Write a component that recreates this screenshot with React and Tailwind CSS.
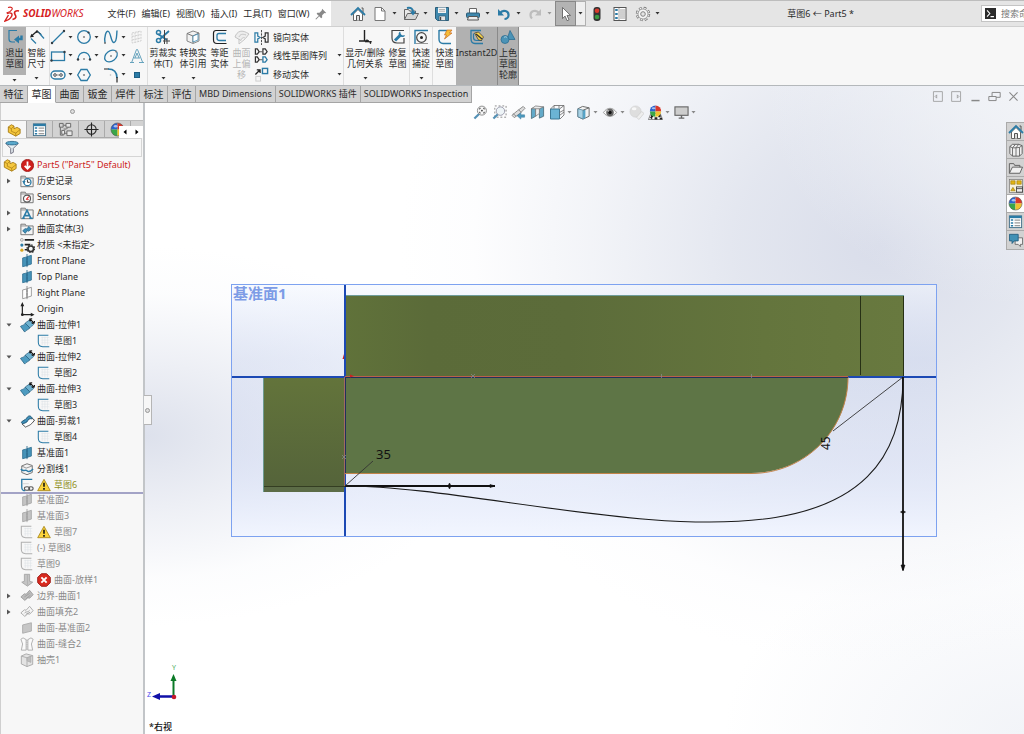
import { useState } from "react";

const BLUE = "#2b7ba6";
const DARK = "#333b42";

function Svg({ w = 16, h = 16, box, children }) {
  return (
    <svg
      width={w}
      height={h}
      viewBox={box || "0 0 16 16"}
      fill="none"
      className="shrink-0"
      aria-hidden="true"
    >
      {children}
    </svg>
  );
}

function Caret({ color = "#333" }) {
  return (
    <svg width="5" height="3" viewBox="0 0 5 3" className="shrink-0" aria-hidden="true">
      <path d="M0.5 0h4L2.5 2.6z" fill={color} />
    </svg>
  );
}

/* ---------- title bar icons ---------- */

const HomeIcon = () => (
  <Svg>
    <path d="M3.5 8v6.5h9V8L8 3.5z" fill="#fff" stroke="#666" />
    <path d="M6.500 14.500V9.500h3v5" fill="#ddd" stroke="#555" />
    <path d="M11.5 2h1.5v4.500" stroke="#555" />
    <path d="M1 9l7-7 7 7" stroke={BLUE} strokeWidth="1.8" />
  </Svg>
);

const NewIcon = () => (
  <Svg>
    <path d="M3 1.5h6.5L13 5v9.5H3z" fill="#fff" stroke="#777" />
    <path d="M9.5 1.5V5H13" stroke="#777" />
  </Svg>
);

const OpenIcon = () => (
  <Svg>
    <path d="M1.5 13.5v-10h4l1 1.5h6v3" fill="#e9e9e9" stroke="#666" />
    <path d="M1.5 13.5l3-6h11l-3 6z" fill="#d5d5d5" stroke="#666" />
    <path d="M4 2c4-1 6 1 6 4" stroke={BLUE} strokeWidth="2" />
    <path d="M7 5.5h6l-3 4z" fill={BLUE} />
  </Svg>
);

const SaveIcon = () => (
  <Svg>
    <path d="M1.5 1.5h13v13h-11l-2-2z" fill="#3f88ad" stroke="#2c5d78" />
    <path d="M4 1.5h8V7H4z" fill="#f4f4f4" />
    <path d="M5 3.5h6M5 5.2h6" stroke="#999" strokeWidth=".7" />
    <path d="M5 10h6.5v4.5H5z" fill="#e5e5e5" stroke="#2c5d78" strokeWidth=".7" />
    <path d="M6.5 11v3" stroke="#444" strokeWidth="1.4" />
  </Svg>
);

const PrintIcon = () => (
  <Svg>
    <path d="M4.5 7V2.5h7V7" fill="#fff" stroke="#666" />
    <rect x="1.5" y="7" width="13" height="4.5" rx="1" fill="#3f88ad" stroke="#2c5d78" />
    <path d="M3.5 10.5h9l1 3.5h-11z" fill="#eee" stroke="#555" />
  </Svg>
);

const UndoIcon = () => (
  <Svg>
    <path d="M4 7c3-4 9-2 8.5 2.5 0 2-2 3.500-4 3.500" stroke={BLUE} strokeWidth="2.2" />
    <path d="M2 3v6.500h6z" fill={BLUE} />
  </Svg>
);

const RedoIcon = () => (
  <Svg>
    <path d="M12 7C9 3 3 5 3.500 9.500c0 1 .5 2 1.500 3" stroke="#bdbdbd" strokeWidth="2.2" />
    <path d="M14 3v6.500H8z" fill="#bdbdbd" />
  </Svg>
);

const CursorIcon = () => (
  <Svg>
    <path d="M4.500 1.500v11l2.600-2.400 2 4.600 1.900-.9-2-4.400H12.500z" fill="#fff" stroke="#555" strokeWidth=".8" />
  </Svg>
);

const TrafficIcon = () => (
  <Svg>
    <rect x="4.500" y="1" width="7" height="14" rx="3" fill="#333" />
    <circle cx="8" cy="4.800" r="2.300" fill="#d93a2b" />
    <circle cx="8" cy="11" r="2.300" fill="#3b9b42" />
  </Svg>
);

const OptionsListIcon = () => (
  <Svg>
    <rect x="2" y="1.500" width="12" height="13" fill="#fff" stroke="#555" />
    <path d="M7 2v12" stroke="#777" strokeWidth=".7" />
    <path d="M3.200 4h2.500M3.200 8h2.500M3.200 12h2.500" stroke={BLUE} strokeWidth="2.200" />
    <path d="M8 4h5M8 6h5M8 8h5M8 10h5M8 12h5" stroke="#888" strokeWidth=".8" />
  </Svg>
);

const GearIcon = () => (
  <Svg>
    <circle cx="8" cy="8" r="5.800" stroke="#777" strokeWidth="2.800" strokeDasharray="2.600 1.955" />
    <circle cx="8" cy="8" r="5.800" stroke="#f6f6f6" strokeWidth="1.300" strokeDasharray="1.600 2.955" strokeDashoffset="-.5" />
    <circle cx="8" cy="8" r="5" fill="#f6f6f6" stroke="#888" strokeWidth=".7" />
    <circle cx="8" cy="8" r="2.300" fill="#e5e5e5" stroke="#777" strokeWidth=".9" />
  </Svg>
);

const PinIcon = () => (
  <Svg w={12} h={12}>
    <path d="M9.500 1l5.500 5.500-1.500.5-1-.3-3 3 0 3-1.300.8-6-6 .8-1.300h3l3-3z" fill="#888" />
    <path d="M5 11l-4 4" stroke="#888" strokeWidth="1.400" />
  </Svg>
);

/* ---------- ribbon icons ---------- */

const ExitSketchIcon = () => (
  <Svg w={18} box="0 0 18 16">
    <path d="M3 1.500h8M3 1v9c0 2 1 3 3 3h3" stroke={BLUE} strokeWidth="1.200" />
    <path d="M15.500 6.500v3.500h-4" stroke={BLUE} strokeWidth="2.400" />
    <path d="M8 10.500l5-4v8z" fill={BLUE} />
  </Svg>
);

const SmartDimIcon = () => (
  <Svg>
    <path d="M2 7.500l6-5.500 4 3.500" stroke="#222" strokeWidth="1.300" />
    <path d="M1 8.500l4-.8-2.500-2.900zM8 1L6 4.300l3.500-1z" fill="#222" />
    <path d="M2 9.500l5 5M11 5l4 4.500" stroke={BLUE} strokeWidth="1.200" />
    <path d="M9 2.500l3.500 3.500" stroke={BLUE} />
  </Svg>
);

const LineIcon = () => (
  <Svg>
    <path d="M2 14L14 2" stroke={BLUE} strokeWidth="1.300" />
    <circle cx="2" cy="14" r="1.200" fill={DARK} />
    <circle cx="14" cy="2" r="1.200" fill={DARK} />
  </Svg>
);

const CircleIcon = () => (
  <Svg>
    <circle cx="8" cy="8" r="6.300" stroke={BLUE} strokeWidth="1.300" />
    <circle cx="8" cy="8" r="1.100" fill="#888" />
    <circle cx="12.500" cy="3.500" r="1.100" fill={DARK} />
  </Svg>
);

const SplineIcon = () => (
  <Svg>
    <path d="M2 14C1 8 3 1 5.500 2.500S8 14 11 13.500 13.500 7 14 1.500" stroke={BLUE} strokeWidth="1.400" />
    <circle cx="2" cy="14" r="1" fill="#777" />
  </Svg>
);

const PlaneDimIcon = () => (
  <Svg>
    <path d="M3 4l9-2v10l-9 2zM3 7.500l9-2M3 11l9-2M6 3.500v10M9 2.500v10" stroke="#cfcfcf" strokeDasharray="2 1" />
  </Svg>
);

const RectIcon = () => (
  <Svg>
    <rect x="1.500" y="4" width="13" height="8.500" stroke={BLUE} strokeWidth="1.300" />
    <circle cx="1.500" cy="12.500" r="1.200" fill={DARK} />
    <circle cx="14.500" cy="4" r="1.200" fill={DARK} />
  </Svg>
);

const ArcIcon = () => (
  <Svg>
    <path d="M2 11.500c0-9.500 12-9.500 12 0" stroke={BLUE} strokeWidth="1.300" />
    <circle cx="2" cy="11.500" r="1.200" fill={DARK} />
    <circle cx="14" cy="11.500" r="1.200" fill={DARK} />
    <circle cx="8" cy="11" r="1" fill="#888" />
  </Svg>
);

const EllipseIcon = () => (
  <Svg>
    <ellipse cx="8" cy="8" rx="7" ry="5" transform="rotate(-38 8 8)" stroke={BLUE} strokeWidth="1.300" />
    <circle cx="8" cy="8" r="1" fill="#888" />
    <circle cx="13" cy="3.500" r="1" fill="#888" />
  </Svg>
);

const TextAIcon = () => (
  <Svg>
    <path d="M1 14.500h4M10 14.500h5M2.800 14L7.500 1.500h1L13.500 14M5 10h6M6 10l2-5 2 5" stroke="#66a3bd" />
  </Svg>
);

const SlotIcon = () => (
  <Svg>
    <rect x="1" y="4" width="14" height="8" rx="4" stroke={BLUE} strokeWidth="1.400" />
    <circle cx="5" cy="8" r="1.300" stroke={DARK} strokeWidth=".9" />
    <circle cx="11" cy="8" r="1.300" stroke={DARK} strokeWidth=".9" />
    <path d="M6 8h4" stroke="#777" strokeWidth=".8" />
  </Svg>
);

const PolygonIcon = () => (
  <Svg>
    <path d="M5 2.500h6L14.300 8 11 13.500H5L1.700 8z" stroke={BLUE} strokeWidth="1.300" />
    <circle cx="8" cy="8" r="1.100" fill="#888" />
  </Svg>
);

const FilletIcon = () => (
  <Svg>
    <path d="M1 2h5" stroke="#444" strokeWidth="1.200" />
    <path d="M5 2c6 0 9 3 9 9" stroke={BLUE} strokeWidth="1.600" />
    <path d="M14 10v5.500" stroke="#222" strokeWidth="1.200" />
    <circle cx="7.500" cy="8" r=".8" fill="#bbb" />
  </Svg>
);

const PointIcon = () => (
  <Svg>
    <rect x="5.500" y="5.500" width="5" height="5" fill={BLUE} stroke="#1d5f85" />
  </Svg>
);

const TrimIcon = () => (
  <Svg>
    <path d="M14 2L5 10M3 5l9 6" stroke={BLUE} strokeWidth="1.800" />
    <circle cx="3.500" cy="3.500" r="2" stroke={BLUE} strokeWidth="1.500" />
    <circle cx="3.500" cy="11.500" r="2" stroke={BLUE} strokeWidth="1.500" />
    <path d="M9.500 1v14M12 9v6M8 12h7" stroke="#444" />
  </Svg>
);

const ConvertIcon = () => (
  <Svg>
    <path d="M2 4.500L8 2l6 2v8l-6 2.500-6-2.500z" fill="#f2f2f2" stroke="#888" />
    <path d="M2 4.500L8 7l6-3M8 7v7" stroke="#777" />
    <path d="M8 7l5-2v6L8 13z" fill="#fff" stroke={BLUE} strokeWidth=".7" />
  </Svg>
);

const OffsetIcon = () => (
  <Svg>
    <path d="M14.500 1.500H4c-1.500 0-2.500 1-2.500 2.500v7c0 2 1 3.500 3.500 3.500h9.500" stroke="#222" strokeWidth="1.200" />
    <path d="M14 4.500H7c-1.300 0-2 .7-2 2V9c0 1.500.8 2.500 2.500 2.500H14" stroke={BLUE} strokeWidth="1.300" />
  </Svg>
);

const SurfOffsetIcon = () => (
  <Svg>
    <path d="M1 8C3 2 8 0 15 5l-3.500 4.500c-2-1.500-3.500-1-4.500 2z" fill="#ededed" stroke="#c4c4c4" />
    <path d="M5 10v5l6-5M5 8c1-2.500 3-3.500 7-2" stroke="#c4c4c4" />
  </Svg>
);

const MirrorIcon = () => (
  <Svg w={15} h={15}>
    <path d="M1 3v10h3V9.500L6.500 8 4 6.500V3z" stroke={BLUE} strokeWidth="1.300" />
    <path d="M15 3v10h-3V9.500L9.500 8 12 6.500V3z" stroke="#333" strokeWidth="1.300" />
    <path d="M8 0v16" stroke="#444" strokeDasharray="2.500 1" />
  </Svg>
);

const PatternIcon = () => (
  <Svg w={15} h={15}>
    <path d="M1.500 1v5.500h2L5.500 4 3.500 1zM9.500 1v5.500h2.500L14 4l-2-3z" stroke="#333" strokeWidth="1.300" />
    <path d="M1.500 9.500V15h2l2-2.500-2-3z" stroke="#333" strokeWidth="1.300" />
    <path d="M9.500 9.500V15h2.500l2-2.500-2-3z" stroke={BLUE} strokeWidth="1.400" />
    <path d="M5 4h4M5 12.500h4" stroke="#555" />
  </Svg>
);

const MoveIcon = () => (
  <Svg w={15} h={15}>
    <path d="M1.500 8L6 3.500M3 3h3.500v3.500" stroke="#222" strokeWidth="1.300" />
    <rect x="9" y="1.500" width="5.500" height="5.500" stroke={BLUE} strokeWidth="1.500" />
    <rect x="2" y="10" width="5" height="5" stroke="#ccc" />
  </Svg>
);

const RelationsIcon = () => (
  <Svg>
    <path d="M7.500 1v11M2 12h10" stroke="#222" strokeWidth="1.400" />
    <path d="M10 10.500l2 2.500h-4zM12 12l1.500 3 1-3" fill="#222" stroke="#222" strokeWidth=".6" />
  </Svg>
);

const RepairIcon = () => (
  <Svg>
    <path d="M14 1.500H2v7.500c0 3 2 5 5 5h7V9" stroke="#444" strokeWidth="1.200" />
    <path d="M5 11.500l6-6" stroke={BLUE} strokeWidth="3" />
    <path d="M10 2.500c1 1.200 0 2.500 1.500 3.500s2.500 0 3.500.5c-1 2-4 2-5.500.5S8.500 3.500 10 2.500z" fill={BLUE} />
  </Svg>
);

const SnapIcon = () => (
  <Svg>
    <path d="M2 15V1.500h13" stroke={BLUE} strokeWidth="1.400" />
    <circle cx="8.500" cy="8.500" r="4.800" stroke="#444" strokeWidth="1.200" />
    <circle cx="8.500" cy="8.500" r="1.500" fill="#222" />
    <path d="M3 14.500h12" stroke="#999" />
  </Svg>
);

const RapidIcon = () => (
  <Svg>
    <path d="M2 1.500h8M2 1v9c0 3 1.500 4.500 4 4.500h8" stroke={BLUE} strokeWidth="1.400" />
    <path d="M10 1h5L12.500 4H15l-7.500 6 2-4H7.500z" fill="#f6bd36" stroke="#c9681c" strokeWidth=".7" />
  </Svg>
);

const InstantIcon = () => (
  <Svg>
    <path d="M12 1.500H2v8c0 3 1.500 5 4 5h8" stroke={BLUE} strokeWidth="1.300" />
    <path d="M4.500 4.500v4c0 2 1 3 3 3H13" stroke={BLUE} strokeWidth="1.200" />
    <path d="M5.500 4l4-1 5 5-2 3.500-3-.5z" fill="#f4d14c" stroke="#333" strokeWidth=".7" />
    <path d="M7 5l6 5" stroke="#333" strokeWidth="1.300" />
  </Svg>
);

const ShadedIcon = () => (
  <Svg>
    <path d="M10 1.500l5 9H7z" fill="#4b93b6" stroke="#2c6d92" strokeWidth=".8" />
    <circle cx="5" cy="10.500" r="4" fill="#4b93b6" stroke="#2c6d92" strokeWidth=".8" />
    <path d="M4 8.500c1-1 2-1 3 0" stroke="#b5d6e4" />
  </Svg>
);

/* ---------- feature tree icons ---------- */

const PartIcon = () => (
  <Svg w={14} h={14}>
    <path d="M1.500 4.500L5 2l3 1.500v3l3.500-1.500L15 7v5l-5 3-8.500-4.500z" fill="#f5c73d" stroke="#a67a14" />
    <path d="M1.500 4.500L5 6.500v3l5 2 5-4M5 6.500l3-3M10 11.500V15" stroke="#a67a14" strokeWidth=".8" />
  </Svg>
);

const RebuildErrorIcon = () => (
  <Svg w={13} h={13}>
    <circle cx="8" cy="8" r="7.500" fill="#cf1f1c" stroke="#9a1310" />
    <path d="M8 3v9M4.500 8.500L8 12l3.500-3.500" stroke="#fff" strokeWidth="2.200" />
  </Svg>
);

function FolderIcon({ children }) {
  return (
    <Svg w={14} h={14}>
      <path d="M1 14.500v-12h5l1.200 2H15v10z" fill="#f3f3f3" stroke="#777" strokeWidth="1.100" />
      <path d="M1 4.500h6" stroke="#888" />
      {children}
    </Svg>
  );
}

const HistoryIcon = () => (
  <FolderIcon>
    <circle cx="8.500" cy="9.300" r="4" fill="#fff" stroke={BLUE} strokeWidth="1.500" />
    <path d="M8.500 6.500v3h2.500" stroke="#222" />
    <path d="M2.500 8h4L4.500 11z" fill={BLUE} />
  </FolderIcon>
);

const SensorsIcon = () => (
  <FolderIcon>
    <circle cx="8" cy="9.800" r="4" fill="#fff" stroke="#555" strokeWidth="1.300" />
    <path d="M7 11l3-3.500" stroke="#d22" strokeWidth="1.300" />
    <path d="M8 11h2" stroke="#d22" />
  </FolderIcon>
);

const AnnotationsIcon = () => (
  <FolderIcon>
    <path d="M3.500 14L8 5l4.500 9M5.500 11h5M2.500 14h3M10.500 14h4" stroke={BLUE} strokeWidth="1.800" />
  </FolderIcon>
);

const SurfaceFolderIcon = () => (
  <FolderIcon>
    <path d="M3 10l3-2.500 2 .5 2-3 3 3-3 2.500-2-.5L6 13z" fill="#3f8fb8" stroke="#236488" strokeWidth=".8" />
  </FolderIcon>
);

const MaterialIcon = () => (
  <Svg w={15} h={15}>
    <path d="M5 2h10M5 7h6" stroke="#222" strokeWidth="1.800" />
    <circle cx="2" cy="2" r="1.500" fill="#eee" stroke="#777" strokeWidth=".6" />
    <circle cx="2" cy="7.500" r="1.700" fill={BLUE} />
    <circle cx="2" cy="13" r="1.700" fill="#d8a51d" />
    <circle cx="11.500" cy="11.500" r="3" stroke="#333" strokeWidth="1.800" />
    <circle cx="11.500" cy="11.500" r="4.200" stroke="#333" strokeWidth="1.200" strokeDasharray="1.500 1.800" />
    <path d="M5 12.500h3" stroke="#222" strokeWidth="1.500" />
  </Svg>
);

function PlaneIcon({ fill = "#4693b8", stroke = "#2b6c8f" }) {
  return (
    <Svg w={14} h={14}>
      <path d="M3 4.500l5-1.200v9.900l-5 1.300zM8 3l5-1.500v10L8 13z" fill={fill} stroke={stroke} strokeWidth=".9" />
      <path d="M8 0v16" stroke={stroke} strokeDasharray="3 1" />
    </Svg>
  );
}

const OriginIcon = () => (
  <Svg w={15} h={15}>
    <path d="M2.500 2v11.500H14" stroke="#222" strokeWidth="1.300" />
    <path d="M.5 4.500L2.500 0l2 4.500zM11.500 11.500l4 2-4 2z" fill="#222" />
    <circle cx="2.500" cy="13.500" r="1.500" fill="#222" />
  </Svg>
);

const ExtrudeIcon = () => (
  <Svg w={15} h={15}>
    <path d="M.5 9c2-2 3 0 5-3.500l5 5C9 13 7 12 5 15z" fill="#4d9bc0" stroke="#245f80" strokeWidth=".8" />
    <path d="M5.500 5.500C7 4 8 4 10 2l4.500 5c-1.500 2-3 1.500-4 3.500z" fill="#6fb2d0" stroke="#245f80" strokeWidth=".8" />
    <path d="M10.500 1l4.500 4.500M13 .8l-2.500.2v2.500M15.500 3.200L15 5.500h-2.500" stroke="#111" strokeWidth="1.200" />
  </Svg>
);

const TrimSurfaceIcon = () => (
  <Svg w={15} h={15}>
    <path d="M2 10.500L6 14c3-2 5-1 9.500-7.500L12 4" fill="#fff" stroke="#444" />
    <path d="M1.500 9c1-2.500 4-2 5.500-4.500S10.500 1 12.500 3.500c1 1.500 0 2-1.500 1.500-2.500-.5-2.500 4-5.500 4.500C3.500 10 2.500 11 1.500 9z" fill="#3f8fb8" stroke="#1f5472" />
  </Svg>
);

function SketchIcon({ color = BLUE }) {
  return (
    <Svg w={14} h={14}>
      <path d="M5 4h9M5 7h9M5 10h9M6 3v10M9 3v10M12 3v10" stroke="#dde3e6" strokeWidth=".6" />
      <path d="M13 1.500H1.500v8c0 3 2 5 5 5h7.500" stroke={color} strokeWidth="1.200" />
    </Svg>
  );
}

const SplitLineIcon = () => (
  <Svg w={14} h={14}>
    <path d="M2 4.500L8 2l6 2v8l-6 2.500-6-2.500z" fill="#f3f3f3" stroke="#666" />
    <path d="M2 4.500L7 7l7-2.500" stroke="#888" />
    <path d="M1 8c3 4 5 0 7 2s4 1 7-2" stroke={BLUE} strokeWidth="1.600" />
  </Svg>
);

const ActiveSketchIcon = () => (
  <Svg w={14} h={14}>
    <path d="M14 1.500H2v9c0 2 1 4 4 4" stroke={BLUE} strokeWidth="1.500" />
    <path d="M2 6.500h8" stroke="#bbb" strokeWidth=".6" />
    <ellipse cx="8" cy="12" rx="3" ry="2" stroke="#555" strokeWidth="1.200" />
    <ellipse cx="12.500" cy="12" rx="2.500" ry="2" stroke="#555" strokeWidth="1.200" />
  </Svg>
);

const WarningIcon = () => (
  <Svg w={14} h={14}>
    <path d="M8 1.500L15.200 14.500H.8z" fill="#fbd33a" stroke="#a8871a" strokeLinejoin="round" />
    <path d="M8 5.500v4.500M8 11.500v1.800" stroke="#111" strokeWidth="1.800" />
  </Svg>
);

const ErrorIcon = () => (
  <Svg w={14} h={14}>
    <path d="M5 .8h6L15.200 5v6L11 15.200H5L.8 11V5z" fill="#d82a20" stroke="#97130e" />
    <path d="M5 5l6 6M11 5l-6 6" stroke="#fff" strokeWidth="2.200" />
  </Svg>
);

const LoftIcon = () => (
  <Svg w={14} h={14}>
    <path d="M5 1.500h6v8l3.500 1-6 4.500-6.500-4.500 3-1z" fill="#c4c4c4" stroke="#a5a5a5" />
    <path d="M8.500 2v12" stroke="#b0b0b0" />
  </Svg>
);

const BoundaryIcon = () => (
  <Svg w={14} h={14}>
    <path d="M1 9l4-3.500 2 .5 4-4.500 4 5-4 4-2-.5L5.500 13z" fill="#bcbcbc" stroke="#9b9b9b" />
    <path d="M5 9l6-4M7 11l5-4" stroke="#969696" strokeWidth=".8" />
  </Svg>
);

const FillIcon = () => (
  <Svg w={14} h={14}>
    <path d="M1 9l4-3.500 2 .5 4-4.500 4 5-4 4-2-.5L5.500 13z" fill="#f6f6f6" stroke="#a5a5a5" />
    <path d="M5 9.500c2-3 3 0 6-3.500M6.500 11c2-2 3-1 5-3" stroke="#999" />
  </Svg>
);

const FlatSurfaceIcon = () => (
  <Svg w={14} h={14}>
    <path d="M3 4.500l10-2.500v9.500L3 14z" fill="#c6c6c6" stroke="#a9a9a9" />
  </Svg>
);

const KnitIcon = () => (
  <Svg w={14} h={14}>
    <path d="M1 2.500l2.500-1.500 3.500 2v12H1.500L3 8zM15 2.500L12.500 1 9 3v12h5.500L13 8z" fill="#fafafa" stroke="#aaa" />
    <path d="M8 3v12" stroke="#aaa" strokeDasharray="1.500 1" />
  </Svg>
);

const ShellIcon = () => (
  <Svg w={14} h={14}>
    <path d="M1.500 3.500L7 1l7.500 2v10L8 15.500l-6.500-3z" fill="#e3e3e3" stroke="#a5a5a5" />
    <path d="M1.500 3.500L8 5.500 14.500 3M8 5.500v10" stroke="#aaa" />
    <path d="M8 5.500l4.500-1.700v7L8 9z" fill="#bdbdbd" stroke="#aaa" strokeWidth=".7" />
  </Svg>
);

/* ---------- manager tab icons ---------- */

const PropertyIcon = () => (
  <Svg w={15} h={15}>
    <rect x="1.500" y="2" width="13" height="12.500" fill="#fff" stroke="#44708a" />
    <path d="M1.500 3.200h13" stroke={BLUE} strokeWidth="2.500" />
    <path d="M3 6.500h2.500M3 9.500h2.500M3 12.500h2.500" stroke={BLUE} strokeWidth="1.600" />
    <path d="M7 6.500h6M7 9.500h6M7 12.500h6" stroke="#777" />
  </Svg>
);

const ConfigIcon = () => (
  <Svg w={15} h={15}>
    <path d="M1.500 1.500h4v4h-4zM2.500 5.500V14M2.500 14H6" stroke="#666" />
    <path d="M8.500 1.500h5v4h-5zM9.500 9.500H15v5H9.500z" fill="#e8e8e8" stroke="#666" />
    <path d="M6 3.500h2.500M6 7.500h3l2-2M6 12h3.500" stroke="#666" />
    <path d="M4 9h3v4H4z" fill="#eee" stroke="#666" />
  </Svg>
);

const TargetIcon = () => (
  <Svg w={15} h={15}>
    <circle cx="8" cy="8" r="5" stroke="#222" strokeWidth="1.100" />
    <path d="M8 .5v15M.5 8h15" stroke="#222" strokeWidth="1.200" />
  </Svg>
);

const BallIcon = () => (
  <Svg w={15} h={15}>
    <path d="M8 8V1a7 7 0 0 0-7 7z" fill="#2b63cf" />
    <path d="M8 8V1a7 7 0 0 1 7 7z" fill="#d8382b" />
    <path d="M8 8H1a7 7 0 0 0 7 7z" fill="#3aa648" />
    <path d="M8 8v7a7 7 0 0 0 7-7z" fill="#f0c22e" />
    <circle cx="8" cy="8" r="7" stroke="#555" strokeWidth=".6" />
    <ellipse cx="6" cy="4.500" rx="2" ry="1.300" fill="#fff" opacity=".6" />
  </Svg>
);

const FilterIcon = () => (
  <Svg w={14} h={15}>
    <path d="M1 3.500L6.500 9v6l3-1.500V9L15 3.500z" fill="#e6eef2" stroke="#667" />
    <ellipse cx="8" cy="3" rx="7" ry="2" fill="#5aa9cc" stroke="#2b6c8f" />
  </Svg>
);

/* ---------- heads-up view toolbar icons ---------- */

const ZoomFitIcon = () => (
  <Svg w={15} h={15}>
    <path d="M7 9l-5.500 5.500" stroke="#5390b5" strokeWidth="2.300" />
    <circle cx="9.500" cy="6" r="4.800" fill="#f7f7f7" stroke="#888" />
    <path d="M7 4.800V3.500h1.300M10.700 3.500H12v1.300M12 7.200v1.300h-1.300M8.300 8.500H7V7.200M8.500 6h2M9.500 5v2" stroke="#333" strokeWidth=".8" />
  </Svg>
);

const ZoomAreaIcon = () => (
  <Svg w={15} h={15}>
    <path d="M3 1h12v12H3z" stroke="#888" strokeDasharray="2 2" />
    <path d="M6.500 9.500l-5 5" stroke="#5390b5" strokeWidth="2.300" />
    <circle cx="9" cy="6.500" r="4.500" fill="#eef4f7" stroke="#99a" />
  </Svg>
);

const PrevViewIcon = () => (
  <Svg w={15} h={15}>
    <path d="M1 11l6-5 6-4.500 2 2-5 5-6.500 5z" fill="#ddd" stroke="#888" />
    <path d="M2 9l3.500 3M8 5l3 3" stroke="#888" />
    <path d="M6.500 11.500l4-3v2h4v2.500h-4V15z" fill="#4f9dc2" stroke="#2f6f92" strokeWidth=".5" />
  </Svg>
);

const SectionIcon = () => (
  <Svg w={15} h={15}>
    <path d="M1.500 4L6 2v10l-4.500 2.500zM10 3.500l4.500-1.500v10L10 14z" fill="#63aac9" stroke="#41626f" strokeWidth=".8" />
    <path d="M6 2l4 1.500V9L6 12z" fill="#f0f0f0" stroke="#777" strokeWidth=".8" />
    <path d="M1.500 4L6 1l8.500 1L10 4z" fill="#ececec" stroke="#777" strokeWidth=".8" />
  </Svg>
);

const OrientIcon = () => (
  <Svg>
    <path d="M1.500 5h9v10h-9z" fill="#6bb4d4" stroke="#3c7894" />
    <path d="M1.500 5L5 1.500h10V11l-4 4M10.500 5L15 1.500M5 1.500v3M10 1.500v3M10.500 8.500L15 6M10.500 11.500L15 8" stroke="#666" strokeWidth=".8" />
  </Svg>
);

const DisplayStyleIcon = () => (
  <Svg w={15} h={15}>
    <path d="M2 4l5-2.500L14 3v9l-6.500 3L2 12.500z" fill="#f3f3f3" stroke="#666" />
    <path d="M2 4l5.500 1.500V15L2 12.500z" fill="#a9d2e4" stroke="#4f7f96" strokeWidth=".8" />
    <path d="M7.500 5.500l2.500-.9v9.200L7.500 15z" fill="#54a3c6" />
    <path d="M7.500 5.500L14 3" stroke="#666" />
  </Svg>
);

const EyeIcon = () => (
  <Svg w={16} h={15}>
    <path d="M1 8c4-6 10-6 14 0-4 5.500-10 5.500-14 0z" fill="#f8f8f8" stroke="#999" />
    <circle cx="8" cy="8" r="4" fill="#666" />
    <circle cx="8" cy="8" r="1.800" fill="#111" />
    <path d="M5 6l2 .5" stroke="#ddd" />
  </Svg>
);

const AppearanceIcon = () => (
  <Svg w={15} h={15}>
    <circle cx="7" cy="7" r="6" fill="#dedede" stroke="#cfcfcf" strokeWidth=".6" />
    <path d="M8 13l5.500-6L16 9l-5.500 6.500z" fill="#eee" stroke="#c9c9c9" strokeWidth=".7" />
    <ellipse cx="5.500" cy="4" rx="2.500" ry="1.700" fill="#f8f8f8" />
  </Svg>
);

const SceneIcon = () => (
  <Svg w={15} h={15}>
    <path d="M3 9h10l2.500 6.500H.5z" fill="#fff" stroke="#333" strokeWidth=".6" />
    <path d="M1.500 13h3v2.500M7 13h3v2.500H7zM3 10.500h2.500V13H3zM11 10h2.500v3H11zM12.500 13.500h2.500v2h-2.500z" fill="#222" />
    <path d="M8 7V.5A6 6 0 0 0 2 7z" fill="#2b63cf" />
    <path d="M8 7V.5A6 6 0 0 1 14 7z" fill="#d8382b" />
    <path d="M8 7H2a6 5.500 0 0 0 6 5.500z" fill="#3aa648" />
    <path d="M8 7v5.500A6 5.500 0 0 0 14 7z" fill="#f0c22e" />
    <ellipse cx="6" cy="3.500" rx="2" ry="1" fill="#fff" opacity=".6" />
  </Svg>
);

const MonitorIcon = () => (
  <Svg w={15} h={15}>
    <rect x="1" y="2" width="14" height="9" fill="#cdcdcd" stroke="#666" strokeWidth="1.200" />
    <path d="M8 11v2.500M5 14h6" stroke="#666" strokeWidth="1.500" />
  </Svg>
);

/* ---------- task pane icons ---------- */

const LibraryIcon = () => (
  <Svg w={14} h={14}>
    <path d="M1 4l3-2.500h7L15 3v9l-3 3H4L1 12z" fill="#eee" stroke="#555" />
    <path d="M1 4l3 1.500V15M4 5.500h4V15M8 5.500L12 5v10M12 5l3-2M4 5.500L7 2M8 5.500l3-4" stroke="#555" strokeWidth=".9" />
  </Svg>
);

const ExplorerIcon = () => (
  <Svg w={15} h={14}>
    <path d="M1 14V3h5l1 2h6v3" fill="#d9d9d9" stroke="#555" />
    <path d="M1 14l3.500-7H16l-3 7z" fill="#f0f0f0" stroke="#555" />
  </Svg>
);

const PaletteIcon = () => (
  <Svg w={14} h={14}>
    <rect x=".7" y=".7" width="14.600" height="14.600" fill="#f5f1dc" stroke="#777" strokeWidth=".8" />
    <path d="M2 2h5v4H2zM9 2h5v4H9zM2 13.500l2.500-4 2.500 4z" fill="#e2b513" stroke="#8b6c08" strokeWidth=".6" />
    <rect x="8.500" y="9" width="7" height="6" fill="#eee" stroke="#444" />
    <path d="M8.500 11h7" stroke="#444" />
  </Svg>
);

const ForumIcon = () => (
  <Svg w={14} h={14}>
    <path d="M7 5.500h8.500v7.500H13v2.500L10.500 13H7z" fill="#f0f0f0" stroke="#666" />
    <path d="M.5 1.500h10v7.500H6L3.500 12V9h-3z" fill="#4191b5" stroke="#245f80" />
  </Svg>
);

/* ---------- data ---------- */

const menus = ["文件(F)", "编辑(E)", "视图(V)", "插入(I)", "工具(T)", "窗口(W)"];

const quickTools = [
  { id: "new", Icon: NewIcon },
  { id: "open", Icon: OpenIcon },
  { id: "save", Icon: SaveIcon },
  { id: "print", Icon: PrintIcon },
  { id: "undo", Icon: UndoIcon },
  { id: "redo", Icon: RedoIcon, muted: true },
];

const sketchTools = [
  { id: "line", Icon: LineIcon, caret: true },
  { id: "circle", Icon: CircleIcon, caret: true },
  { id: "spline", Icon: SplineIcon, caret: true },
  { id: "sketch-plane", Icon: PlaneDimIcon },
  { id: "rectangle", Icon: RectIcon, caret: true },
  { id: "arc", Icon: ArcIcon, caret: true },
  { id: "ellipse", Icon: EllipseIcon, caret: true },
  { id: "text", Icon: TextAIcon },
  { id: "slot", Icon: SlotIcon, caret: true },
  { id: "polygon", Icon: PolygonIcon },
  { id: "fillet", Icon: FilletIcon, caret: true },
  { id: "point", Icon: PointIcon },
];

const listTools = [
  { label: "镜向实体", Icon: MirrorIcon },
  { label: "线性草图阵列", Icon: PatternIcon, caret: true },
  { label: "移动实体", Icon: MoveIcon, caret: true },
];

const commandTabs = ["特征", "草图", "曲面", "钣金", "焊件", "标注", "评估"];

const addinTabs = ["MBD Dimensions", "SOLIDWORKS 插件", "SOLIDWORKS Inspection"];

const GrayPlane = () => <PlaneIcon fill="#c4c4c4" stroke="#a2a2a2" />;
const WhitePlane = () => <PlaneIcon fill="#fff" stroke="#888" />;
const GraySketch = () => <SketchIcon color="#b0b0b0" />;

const tree = [
  { label: "历史记录", Icon: HistoryIcon, arrow: "right" },
  { label: "Sensors", Icon: SensorsIcon },
  { label: "Annotations", Icon: AnnotationsIcon, arrow: "right" },
  { label: "曲面实体(3)", Icon: SurfaceFolderIcon, arrow: "right" },
  { label: "材质 <未指定>", Icon: MaterialIcon },
  { label: "Front Plane", Icon: PlaneIcon },
  { label: "Top Plane", Icon: PlaneIcon },
  { label: "Right Plane", Icon: WhitePlane },
  { label: "Origin", Icon: OriginIcon },
  { label: "曲面-拉伸1", Icon: ExtrudeIcon, arrow: "down" },
  { label: "草图1", Icon: SketchIcon, child: true },
  { label: "曲面-拉伸2", Icon: ExtrudeIcon, arrow: "down" },
  { label: "草图2", Icon: SketchIcon, child: true },
  { label: "曲面-拉伸3", Icon: ExtrudeIcon, arrow: "down" },
  { label: "草图3", Icon: SketchIcon, child: true },
  { label: "曲面-剪裁1", Icon: TrimSurfaceIcon, arrow: "down" },
  { label: "草图4", Icon: SketchIcon, child: true },
  { label: "基准面1", Icon: PlaneIcon },
  { label: "分割线1", Icon: SplitLineIcon },
  { label: "草图6", Icon: ActiveSketchIcon, Badge: WarningIcon, active: true },
];

const rolledBack = [
  { label: "基准面2", Icon: GrayPlane },
  { label: "基准面3", Icon: GrayPlane },
  { label: "草图7", Icon: GraySketch, Badge: WarningIcon },
  { label: "(-) 草图8", Icon: GraySketch },
  { label: "草图9", Icon: GraySketch },
  { label: "曲面-放样1", Icon: LoftIcon, Badge: ErrorIcon },
  { label: "边界-曲面1", Icon: BoundaryIcon, arrow: "right" },
  { label: "曲面填充2", Icon: FillIcon, arrow: "right" },
  { label: "曲面-基准面2", Icon: FlatSurfaceIcon },
  { label: "曲面-缝合2", Icon: KnitIcon },
  { label: "抽壳1", Icon: ShellIcon },
];

const managerTabs = [PartIcon, PropertyIcon, ConfigIcon, TargetIcon, BallIcon];

const viewTools = [
  { id: "zoom-fit", Icon: ZoomFitIcon },
  { id: "zoom-area", Icon: ZoomAreaIcon },
  { id: "previous-view", Icon: PrevViewIcon },
  { id: "section", Icon: SectionIcon },
  { id: "orientation", Icon: OrientIcon, caret: true },
  { id: "display-style", Icon: DisplayStyleIcon, caret: true },
  { id: "hide-show", Icon: EyeIcon, caret: true },
  { id: "appearance", Icon: AppearanceIcon },
  { id: "scene", Icon: SceneIcon, caret: true },
  { id: "view-settings", Icon: MonitorIcon, caret: true },
];

const taskPane = [
  { id: "home", Icon: HomeIcon },
  { id: "library", Icon: LibraryIcon },
  { id: "explorer", Icon: ExplorerIcon },
  { id: "palette", Icon: PaletteIcon },
  { id: "appearances", Icon: BallIcon, active: true },
  { id: "properties", Icon: PropertyIcon },
  { id: "forum", Icon: ForumIcon },
];

/* ---------- sections ---------- */

function TitleBar() {
  return (
    <header className="flex h-[27px] shrink-0 items-stretch border-t border-b border-t-[#bdbdbd] border-b-[#d0d0d0] bg-[#e5e5e5]">
      <div className="flex shrink-0 items-center bg-white pr-1 pl-1">
        <svg width="16" height="16" viewBox="0 0 16 16" fill="none" aria-hidden="true">
          <path d="M4 1.500c3-1 5 .2 4 2S4.500 6.500 2.500 7" stroke="#d6221f" strokeWidth="1.100" />
          <path d="M3 7.500c4-1.500 6 0 4.500 3-1 2-3 3.500-6.500 4.500L4.500 9" stroke="#d6221f" strokeWidth="1.400" />
          <path d="M15 5c-3-.8-5.500.5-4 3.500 1.500 2 1.500 4-2.500 5" stroke="#d6221f" strokeWidth="1.600" />
        </svg>
        <span className="ml-[3px] text-[10px] text-[#d6221f] italic">
          <b>SOLID</b>WORKS
        </span>
        <nav className="ml-6 flex gap-[6px]">
          {menus.map((menu) => (
            <button key={menu} className="whitespace-nowrap">
              {menu}
            </button>
          ))}
        </nav>
        <button aria-label="pin" className="ml-[6px]">
          <PinIcon />
        </button>
      </div>

      <div className="ml-[19px] flex shrink-0 items-center gap-[6px]">
        <button aria-label="home">
          <HomeIcon />
        </button>
        {quickTools.map(({ id, Icon, muted }) => (
          <button key={id} aria-label={id} className="flex items-center gap-1">
            <Icon />
            <Caret color={muted ? "#999" : "#333"} />
          </button>
        ))}
      </div>
      <div className="ml-[3px] flex shrink-0 items-stretch">
        <button
          aria-label="select"
          className="flex w-[21px] items-center justify-center border border-[#888] bg-[#b3b3b3]"
        >
          <CursorIcon />
        </button>
        <button
          aria-label="select options"
          className="flex w-[10px] items-center justify-center border border-l-0 border-[#b0b0b0] bg-[#efefef]"
        >
          <Caret />
        </button>
      </div>
      <div className="ml-[3px] flex shrink-0 items-center gap-[7px]">
        <button aria-label="rebuild">
          <TrafficIcon />
        </button>
        <button aria-label="file properties">
          <OptionsListIcon />
        </button>
        <button aria-label="options" className="flex items-center gap-1">
          <GearIcon />
          <Caret />
        </button>
      </div>
      <h1 className="flex-1 self-center text-center">草图6 ← Part5 *</h1>
      <label className="my-1 flex w-[43px] shrink-0 items-center gap-[5px] overflow-hidden border border-r-0 border-[#c4c4c4] bg-white pl-[3px]">
        <Svg w={11} h={11}>
          <rect width="16" height="16" fill="#2b2b2b" />
          <path d="M3 3.500L7 8l-4 4.500M8 12.500h5" stroke="#fff" strokeWidth="1.600" />
        </Svg>
        <input
          type="search"
          aria-label="搜索命令"
          placeholder="搜索命令"
          className="w-[60px] shrink-0 outline-none placeholder:text-[#777]"
        />
      </label>
    </header>
  );
}

function RibbonButton({ Icon, lines, caret, active, muted, className = "" }) {
  return (
    <button
      className={
        "flex shrink-0 flex-col items-center pt-[2px] pb-[5px] leading-[11px] " +
        (active ? "bg-[#b1b1b1] " : "") +
        (muted ? "text-[#b5b5b5] " : "") +
        className
      }
    >
      <Icon />
      <span className="mt-[2px] flex flex-col whitespace-nowrap">
        {lines.map((line) => (
          <span key={line}>{line}</span>
        ))}
      </span>
      {caret && (
        <span className="mt-auto">
          <Caret />
        </span>
      )}
    </button>
  );
}

function Ribbon() {
  return (
    <section className="flex h-[58px] shrink-0 items-stretch bg-[#f7f7f7] pl-[3px]">
      <button className="flex w-[23px] shrink-0 flex-col items-center leading-[11px]">
        <span className="flex flex-col items-center self-stretch bg-[#b1b1b1] pt-[2px] pb-[6px]">
          <ExitSketchIcon />
          <span className="mt-[2px]">退出</span>
          <span>草图</span>
        </span>
        <span className="flex flex-1 items-center">
          <Caret />
        </span>
      </button>
      <RibbonButton Icon={SmartDimIcon} lines={["智能", "尺寸"]} caret className="w-[21px]" />

      <div className="ml-[2px] grid grid-cols-[26px_27px_26px_18px] grid-rows-3 border-r border-l border-[#dedede] py-px">
        {sketchTools.map(({ id, Icon, caret }) => (
          <button key={id} aria-label={id} className="flex items-center gap-[2px]">
            <Icon />
            {caret && <Caret />}
          </button>
        ))}
      </div>

      <RibbonButton Icon={TrimIcon} lines={["剪裁实", "体(T)"]} caret className="w-[30px] text-center" />
      <RibbonButton Icon={ConvertIcon} lines={["转换实", "体引用"]} caret className="w-[30px]" />
      <RibbonButton Icon={OffsetIcon} lines={["等距", "实体"]} className="w-[23px]" />
      <RibbonButton Icon={SurfOffsetIcon} lines={["曲面", "上偏", "移"]} muted className="w-[21px] text-center" />

      <div className="grid w-[92px] shrink-0 grid-rows-3 border-r border-[#dedede] py-px pl-[2px]">
        {listTools.map(({ label, Icon, caret }) => (
          <button key={label} className="flex items-center gap-1 whitespace-nowrap">
            <Icon />
            {label}
            {caret && (
              <span className="mr-px ml-auto">
                <Caret />
              </span>
            )}
          </button>
        ))}
      </div>

      <RibbonButton
        Icon={RelationsIcon}
        lines={["显示/删除", "几何关系"]}
        caret
        className="w-[42px] text-center"
      />
      <RibbonButton Icon={RepairIcon} lines={["修复", "草图"]} className="w-[23px]" />
      <RibbonButton
        Icon={SnapIcon}
        lines={["快速", "捕捉"]}
        caret
        className="w-[24px] border-r border-l border-[#dedede]"
      />
      <RibbonButton Icon={RapidIcon} lines={["快速", "草图"]} className="w-[23px]" />
      <RibbonButton Icon={InstantIcon} lines={["Instant2D"]} active className="w-[42px] border-r border-[#8a8a8a]" />
      <RibbonButton Icon={ShadedIcon} lines={["上色", "草图", "轮廓"]} active className="w-[21px] border-r border-[#8a8a8a]" />
    </section>
  );
}

function CommandTabs() {
  const [tab, setTab] = useState("草图");

  const tabClass = (name) =>
    "h-[17px] border-r border-b border-[#a5a5a5] text-center whitespace-nowrap " +
    (tab === name ? "border-b-white bg-white " : "bg-[#d2d2d2] ");

  return (
    <nav className="flex w-max">
      {commandTabs.map((name) => (
        <button
          key={name}
          onClick={() => setTab(name)}
          className={tabClass(name) + "w-[28px] text-[10px]"}
        >
          {name}
        </button>
      ))}
      {addinTabs.map((name) => (
        <button key={name} onClick={() => setTab(name)} className={tabClass(name) + "px-[3px]"}>
          {name}
        </button>
      ))}
    </nav>
  );
}

function TreeItem({ item, muted }) {
  const { label, Icon, Badge, arrow, child, active } = item;
  return (
    <li
      className={
        "flex h-4 items-center whitespace-nowrap " +
        (active ? "text-[#8f8f1c]" : muted ? "text-[#8a8a8a]" : "")
      }
    >
      <span className="flex w-[19px] shrink-0 justify-start pl-[5px]">
        {arrow && (
          <button aria-label={"toggle " + label}>
            <svg width="6" height="6" viewBox="0 0 6 6" fill="#555" aria-hidden="true">
              <path d={arrow === "right" ? "M1 .5l3.500 2.500L1 5.500z" : "M.5 1.500h5L3 4.500z"} />
            </svg>
          </button>
        )}
      </span>
      {child && <span className="w-[17px] shrink-0" />}
      <span className="flex w-[17px] shrink-0">
        <Icon />
      </span>
      {Badge && (
        <span className="flex w-[17px] shrink-0">
          <Badge />
        </span>
      )}
      {label}
    </li>
  );
}

function FeatureManager() {
  return (
    <aside className="relative flex w-[145px] shrink-0 flex-col border-r-2 border-l border-r-[#c2c5c8] border-l-[#cfcfcf] bg-[#f7f7f7]">
      <div className="flex h-[17px] items-center justify-center">
        <span className="size-[5px] rounded-full border border-[#999] bg-[#ddd]" />
      </div>
      <div className="relative flex h-[18px] border-t border-[#bbb]">
        {managerTabs.map((Icon, i) => (
          <button
            key={i}
            aria-label={"manager " + (i + 1)}
            className={
              "flex w-[26px] items-center justify-center border-r border-[#aaa] " +
              (i === 0 ? "bg-[#f7f7f7]" : "border-b bg-[#d2d2d2]")
            }
          >
            <Icon />
          </button>
        ))}
        <span className="flex-1 border-b border-[#aaa] bg-[#d2d2d2]" />
        <div className="absolute right-0 bottom-0 flex h-[12px] bg-white">
          <button aria-label="previous" className="flex w-[12px] items-center justify-center">
            <svg width="4" height="6" viewBox="0 0 4 6" aria-hidden="true">
              <path d="M3.500 0.500v5L0.500 3z" />
            </svg>
          </button>
          <button aria-label="next" className="flex w-[12px] items-center justify-center">
            <svg width="4" height="6" viewBox="0 0 4 6" aria-hidden="true">
              <path d="M.5 .5v5l3-2.500z" />
            </svg>
          </button>
        </div>
      </div>
      <div className="mx-px flex h-[19px] items-center border border-[#d5d5d5] pl-[2px]">
        <FilterIcon />
      </div>
      <div className="flex h-4 items-center pl-[2px] whitespace-nowrap text-[#cc2222]">
        <PartIcon />
        <span className="mr-[3px] ml-1">
          <RebuildErrorIcon />
        </span>
        Part5 ("Part5" Default)
      </div>
      <ul>
        {tree.map((item) => (
          <TreeItem key={item.label} item={item} />
        ))}
      </ul>
      <div className="relative -mt-px">
        <hr className="absolute inset-x-0 top-0 border-t-2 border-[#a3a3c6]" />
        <ul>
          {rolledBack.map((item) => (
            <TreeItem key={item.label} item={item} muted />
          ))}
        </ul>
      </div>
      <button
        aria-label="collapse panel"
        className="absolute top-[292px] -right-[9px] flex h-[30px] w-[8px] items-center justify-center border border-l-0 border-[#b5b5b5] bg-[#f7f7f7]"
      >
        <span className="size-[5px] rounded-full border border-[#999] bg-[#ddd]" />
      </button>
    </aside>
  );
}

/* model view; the group is shifted so that its coordinates count from the window's top */
function Scene() {
  return (
    <svg className="h-full w-full" aria-label="model view">
      <defs>
        <linearGradient id="upper" x1="0" x2="1" y1="0" y2="0">
          <stop offset="0" stopColor="#60723a" />
          <stop offset=".15" stopColor="#5b6b39" />
          <stop offset=".4" stopColor="#5c6c3a" />
          <stop offset=".75" stopColor="#64753d" />
          <stop offset="1" stopColor="#68793f" />
        </linearGradient>
        <linearGradient id="side" x1="0" x2="0" y1="0" y2="1">
          <stop offset="0" stopColor="#63743b" />
          <stop offset="1" stopColor="#54633a" />
        </linearGradient>
        <linearGradient id="plane" x1="0" x2="0" y1="0" y2="1">
          <stop offset="0" stopColor="#f3f7ff" stopOpacity=".55" />
          <stop offset=".3" stopColor="#c3cfee" stopOpacity=".35" />
          <stop offset=".6" stopColor="#c6d1f0" stopOpacity=".35" />
          <stop offset="1" stopColor="#f1f5ff" stopOpacity=".9" />
        </linearGradient>
      </defs>

      <g transform="translate(0 -86)">
        <rect x="231.500" y="284.500" width="705" height="252" fill="url(#plane)" stroke="#7da2f0" />
        <text x="233" y="299" fontSize="15" fontWeight="700" fill="#7d9ce6">
          基准面1
        </text>

        <rect x="345" y="296" width="559" height="80" fill="url(#upper)" />
        <path d="M345 295.500h559" stroke="#6f9d9a" />
        <path d="M860.500 296v79M903.500 296v80" stroke="#263014" />
        <rect x="264" y="377" width="81" height="115" fill="url(#side)" />
        <path d="M263.500 377v115" stroke="#6d9a90" />
        <rect x="264" y="487" width="81" height="5" fill="#5c6c47" />

        <path d="M232 377h704" stroke="#1c49b4" strokeWidth="2" />
        <path d="M345 285v251" stroke="#1c49b4" strokeWidth="2" />

        <path d="M345 377.500h503c0 53-43 95.500-97 95.500H345z" fill="#5e7546" />
        <path d="M848 377c0 53-43 96.500-97 96.500H345" stroke="#c3844a" fill="none" />
        <path d="M345 377.500h503" stroke="#22305c" />
        <path d="M345 376.500h503" stroke="#b9614a" />
        <path d="M344.500 377v110" stroke="#a06a62" />
        <path d="M345.500 377v96" stroke="#22305c" />
        <path d="M342.500 359l1.500-5v5zM350 374.500l4 1.500-4 1.500z" fill="#c22" />
        <path
          d="M471 374l4 4m-4 0l4-4M342 455l4 4m-4 0l4-4M751.500 374v4M661.500 374v4"
          stroke="#888"
          strokeWidth=".8"
        />

        <path d="M264 486.500h81" stroke="#343e22" />
        <path d="M345 486h150" stroke="#111" strokeWidth="1.800" />
        <path d="M449.500 483l1.500 3-1.500 3-1.500-3zM490 484.500l5 1.500-5 1.500z" fill="#111" stroke="#111" strokeWidth=".6" />
        <path d="M345 486C532 486 903 618 903 377" stroke="#1a1a1a" strokeWidth="1.100" fill="none" />
        <path d="M345 486l28-25M903 377l-70 54" stroke="#333" strokeWidth=".9" />
        <path d="M903 377v193" stroke="#111" strokeWidth="1.800" />
        <path d="M900.500 512l2.500-1.500 2.500 1.500-2.500 1.500zM901 565h4l-2 6z" fill="#111" stroke="#111" strokeWidth=".6" />
        <text x="376" y="459" fontSize="13" fill="#111">
          35
        </text>
        <text fontSize="12" fill="#111" transform="translate(830 450) rotate(-90)">
          45
        </text>

        <path d="M173.500 696v-16" stroke="#0c7a28" strokeWidth="2" />
        <path d="M170.500 681l3-7 3 7z" fill="#0c7a28" />
        <path d="M174 696.500h-16" stroke="#1010a8" strokeWidth="2.500" />
        <path d="M160 693l-8 3.500 8 3.500z" fill="#1010a8" />
        <circle cx="174" cy="697" r="2.300" fill="#c4182a" />
        <text x="172" y="670" fontSize="7" fill="#4fae5c">
          Y
        </text>
        <text x="147" y="697" fontSize="7" fill="#4a4aee">
          Z
        </text>
        <text x="149" y="730" fontSize="9" fontWeight="500" fill="#111">
          *右视
        </text>
      </g>
    </svg>
  );
}

function WindowControls() {
  return (
    <div className="absolute top-1 right-1 flex gap-[6px]">
      <button aria-label="dock left">
        <Svg w={13} h={13}>
          <path d="M3 2h11v12H3zM7 6L5 8l2 2z" stroke="#999" />
        </Svg>
      </button>
      <button aria-label="dock right">
        <Svg w={13} h={13}>
          <path d="M2 2h11v12H2zM9 6l2 2-2 2z" stroke="#999" />
        </Svg>
      </button>
      <button aria-label="minimize">
        <Svg w={13} h={13}>
          <path d="M3 13h10" stroke="#888" strokeWidth="1.800" />
        </Svg>
      </button>
      <button aria-label="restore">
        <Svg w={13} h={13}>
          <path d="M1 8h9v5H1zM5 8V3h10v6h-5" stroke="#888" strokeWidth="1.200" />
        </Svg>
      </button>
      <button aria-label="close">
        <Svg w={13} h={13}>
          <path d="M3 3l10 10M13 3L3 13" stroke="#888" strokeWidth="1.300" />
        </Svg>
      </button>
    </div>
  );
}

export default function App() {
  return (
    <div className="flex h-screen flex-col overflow-hidden bg-[#f7f7f7] font-['Noto_Sans','Noto_Sans_CJK_SC',sans-serif] text-[9px] text-[#2a2a2a]">
      <TitleBar />
      <Ribbon />
      <main className="relative flex min-h-0 flex-1 flex-col border-t border-[#b4b8bb]">
        <div className="absolute inset-0 bg-white bg-[radial-gradient(ellipse_260px_220px_at_100%_0%,#f1f3f7_0%,#f1f3f700_100%),radial-gradient(ellipse_480px_420px_at_880px_160px,#d9ddea_0%,#dde1ecd0_30%,#e6e9f180_60%,#f5f6fa30_85%,#ffffff00_100%),radial-gradient(ellipse_330px_190px_at_145px_350px,#dde1ec_0%,#e4e7f0a0_40%,#f3f5f940_75%,#ffffff00_100%),radial-gradient(ellipse_300px_200px_at_100%_100%,#f2f4f8_0%,#ffffff00_100%)]">
          <Scene />
        </div>
        <div className="relative flex min-h-0 flex-1 flex-col">
          <CommandTabs />
          <div className="flex min-h-0 flex-1">
            <FeatureManager />
          </div>
        </div>
        <div className="absolute top-[18px] left-[473px] flex items-center gap-[4px]">
          {viewTools.map(({ id, Icon, caret }) => (
            <button key={id} aria-label={id} className="flex items-center gap-[2px]">
              <Icon />
              {caret && <Caret color="#888" />}
            </button>
          ))}
        </div>
        <WindowControls />
        <div className="absolute top-[36px] right-0 flex w-[18px] flex-col border border-r-0 border-[#aaa]">
          {taskPane.map(({ id, Icon, active }) => (
            <button
              key={id}
              aria-label={id}
              className={
                "flex h-[18px] items-center justify-center border-b border-[#aaa] last:border-b-0 " +
                (active ? "bg-white" : "bg-[#d2d2d2]")
              }
            >
              <Icon />
            </button>
          ))}
        </div>
      </main>
    </div>
  );
}
